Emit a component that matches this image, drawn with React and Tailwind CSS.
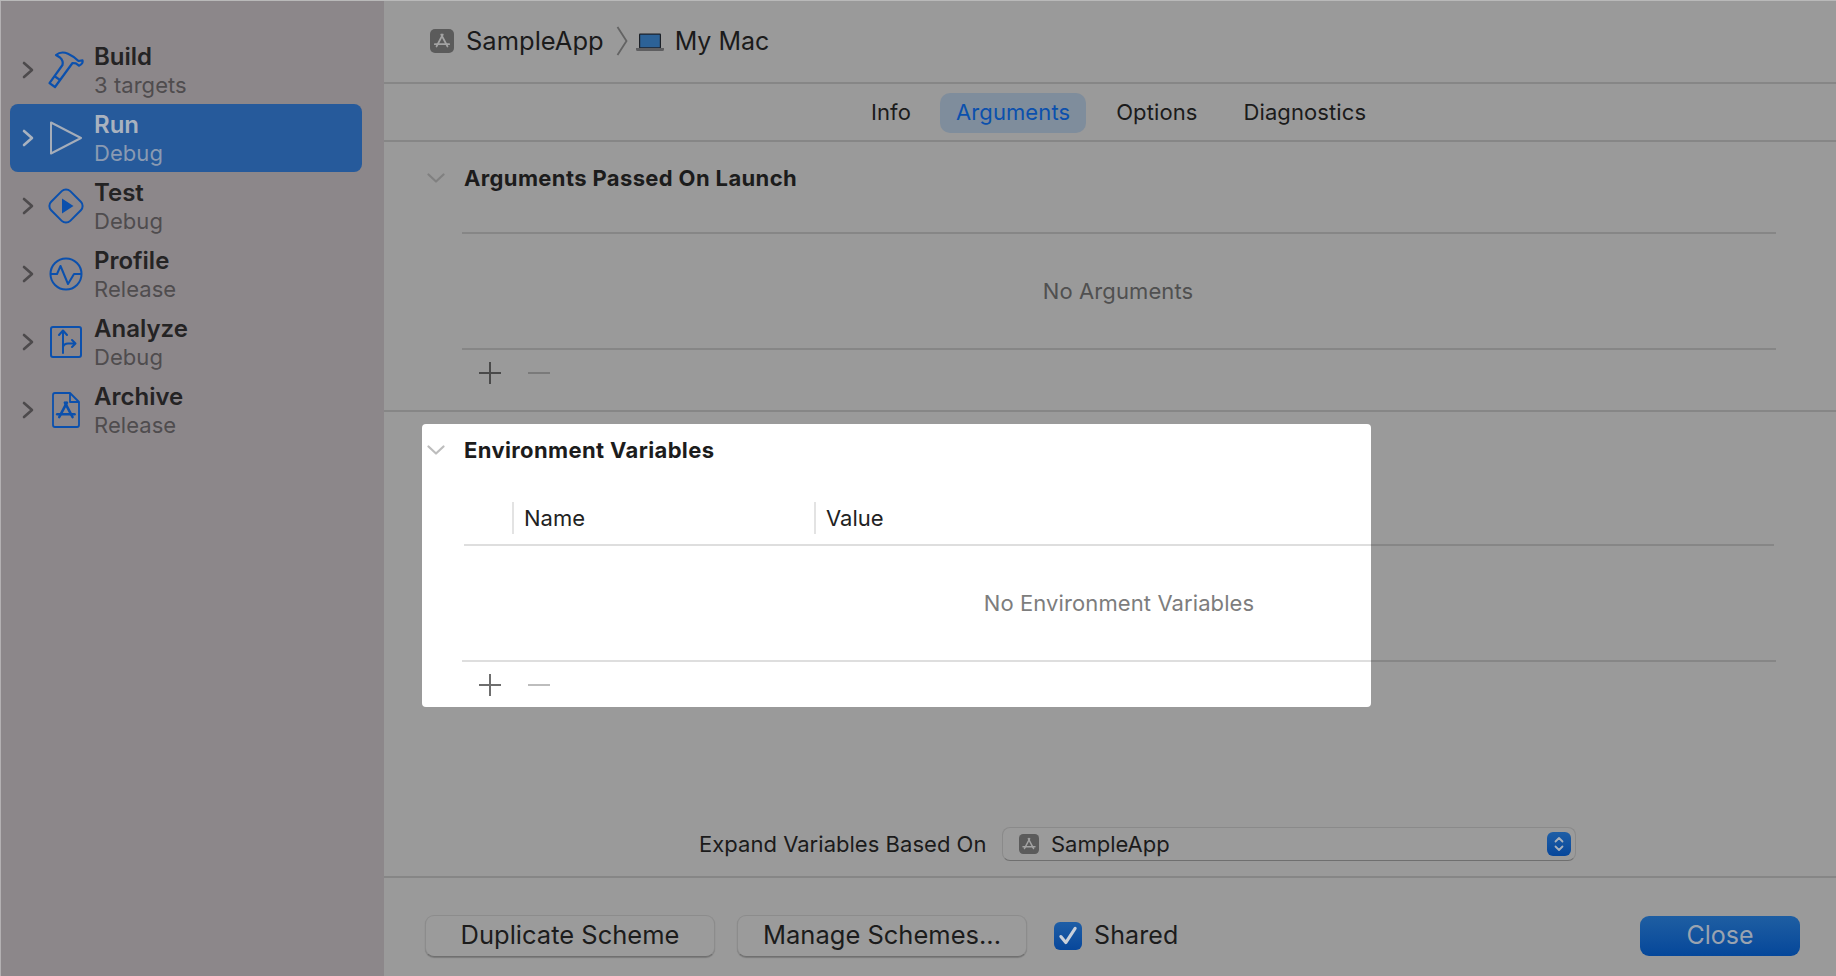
import React from 'react';

const BLUE = '#0b50ad';

// little three-stroke "A" used by the app icon and the archive icon
const AppGlyph = ({ color, width = 2 }) => (
  <g fill="none" stroke={color} strokeWidth={width} strokeLinecap="round">
    <path d="M12.8 5.5 6.5 17.5" />
    <path d="M11.2 5.5 17.5 17.5" />
    <path d="M4.8 15.2H19.2" />
  </g>
);

const AppIcon = ({ className }) => (
  <svg viewBox="0 0 24 24" className={className}>
    <rect width="24" height="24" rx="5" fill="#5b5b5b" />
    <AppGlyph color="#a3a3a3" width={1.7} />
  </svg>
);

const Chevron = ({ color }) => (
  <svg viewBox="0 0 12 18" className="w-3 h-[18px]">
    <path d="M2 2l8 7-8 7" fill="none" stroke={color} strokeWidth="2.6" strokeLinecap="round" strokeLinejoin="round" />
  </svg>
);

const DownChevron = ({ color }) => (
  <svg viewBox="0 0 18 10" className="w-[18px] h-[10px]">
    <path d="M1.5 1.5 9 8.5l7.5-7" fill="none" stroke={color} strokeWidth="2.2" strokeLinecap="round" strokeLinejoin="round" />
  </svg>
);

const Hammer = () => (
  <svg viewBox="46 46 40 44" className="w-10 h-11">
    <g fill="none" stroke={BLUE} strokeWidth="2.2" strokeLinejoin="round">
      <path d="M56 53c3-2.500 8-3 12-1.300 4 1.700 7 4 10.500 7.300l4-.6c.5 1.800-.6 4-3.600 5.300l-3-2.300-3.400-.4L55 85l-5.500-3.800L62.500 63c.7-3-.2-5.500-2.500-7.500z" />
      <path d="M55 74.500l5.200 3.700" />
    </g>
  </svg>
);

const RunIcon = () => (
  <svg viewBox="46 116 40 40" className="w-10 h-10">
    <path d="M51 120.500 81 136 51 151.500z" fill="none" stroke="#a5adb9" strokeWidth="2" strokeLinejoin="round" />
  </svg>
);

const TestIcon = () => (
  <svg viewBox="46 184 40 40" className="w-10 h-10">
    <rect x="52.500" y="190.500" width="27" height="27" rx="6" fill="none" stroke={BLUE} strokeWidth="2" transform="rotate(45 66 204)" />
    <path d="M62 196.500 73.500 204 62 211.500z" fill={BLUE} />
  </svg>
);

const ProfileIcon = () => (
  <svg viewBox="46 252 40 40" className="w-10 h-10">
    <circle cx="66" cy="272" r="15.500" fill="none" stroke={BLUE} strokeWidth="2" />
    <path d="M51 272h6l3.500-8 7.500 18 6-10h7.500" fill="none" stroke={BLUE} strokeWidth="2" strokeLinejoin="round" />
  </svg>
);

const AnalyzeIcon = () => (
  <svg viewBox="46 320 40 40" className="w-10 h-10">
    <rect x="51" y="325" width="30" height="30" rx="2" fill="none" stroke={BLUE} strokeWidth="2" />
    <g fill="none" stroke={BLUE} strokeWidth="2" strokeLinecap="round" strokeLinejoin="round">
      <path d="M63 351V329M59 333l4-4.500 4 4.500" />
      <path d="M63 345c1-3 3-3.500 5-3.500h7M72 338l3.500 3.500-3.500 3.500" />
    </g>
  </svg>
);

const ArchiveIcon = () => (
  <svg viewBox="46 388 40 40" className="w-10 h-10">
    <path d="M55 391h15l9 9v23a2 2 0 0 1-2 2H55a2 2 0 0 1-2-2v-30a2 2 0 0 1 2-2zM70 391v9h9" fill="none" stroke={BLUE} strokeWidth="1.800" strokeLinejoin="round" />
    <g transform="translate(51.500 394) scale(1.200)">
      <AppGlyph color={BLUE} width={2.200} />
    </g>
  </svg>
);

const Laptop = () => (
  <svg viewBox="0 0 28 18" className="w-7 h-[18px]">
    <rect x="3" y="0.500" width="22" height="15" rx="1" fill="#1a1f26" />
    <rect x="4.200" y="1.700" width="19.600" height="12.600" fill="#2c6297" />
    <path d="M0 15h28v1.500a1.500 1.500 0 0 1-1.500 1.500h-25A1.500 1.500 0 0 1 0 16.500z" fill="#5e5e60" />
  </svg>
);

const schemes = [
  { title: 'Build', sub: '3 targets', Icon: Hammer },
  { title: 'Run', sub: 'Debug', Icon: RunIcon, selected: true },
  { title: 'Test', sub: 'Debug', Icon: TestIcon },
  { title: 'Profile', sub: 'Release', Icon: ProfileIcon },
  { title: 'Analyze', sub: 'Debug', Icon: AnalyzeIcon },
  { title: 'Archive', sub: 'Release', Icon: ArchiveIcon },
];

const Sidebar = () => (
  <aside className="w-[384px] shrink-0 bg-[#8c878a] border-l border-[#b3b0b2] pt-[35px] pl-[9px] pr-[22px]">
    {schemes.map(({ title, sub, Icon, selected }) => (
      <div
        key={title}
        className={`h-[68px] flex items-center rounded-lg pl-[12px] ${selected ? 'bg-[#265a9b]' : ''}`}
      >
        <Chevron color={selected ? '#a9b2bf' : '#4d4a4c'} />
        <div className="ml-3 w-10 flex justify-center">
          <Icon />
        </div>
        <div className="ml-2 pt-[2px] flex flex-col">
          <span className={`text-[24px] leading-[28px] font-semibold ${selected ? 'text-[#a9b2bf]' : 'text-[#242324]'}`}>
            {title}
          </span>
          <span className={`text-[22px] leading-[28px] tracking-[0.05px] ${selected ? 'text-[#8a9ab2]' : 'text-[#4f4c4e]'}`}>{sub}</span>
        </div>
      </div>
    ))}
  </aside>
);

const tabs = ['Info', 'Arguments', 'Options', 'Diagnostics'];

const Tabs = () => (
  <div className="h-[58px] shrink-0 border-b-2 border-[#868686] flex items-center gap-4 pl-[472px] pt-px">
    {tabs.map((t) => (
      <div
        key={t}
        className={`h-10 flex items-center rounded-[10px] text-[22px] tracking-[0.1px] ${
          t === 'Arguments' ? 'px-4 -ml-[2px] -mr-px bg-[#7f8d9c] text-[#0b50ad]' : 'px-[15px] text-[#1b1b1b]'
        }`}
      >
        {t}
      </div>
    ))}
  </div>
);

const PlusMinus = ({ plus, minus }) => (
  <div className="h-12 flex items-center pl-[17px] gap-[27px]">
    <svg viewBox="0 0 22 22" className="w-[22px] h-[22px]">
      <path d="M11 0v22M0 11h22" stroke={plus} strokeWidth="2" />
    </svg>
    <div className={`w-[22px] h-[2px] ${minus}`} />
  </div>
);

const Heading = ({ chevron, children, className }) => (
  <div className={`flex items-center ${className}`}>
    <div className="w-[80px] flex justify-end pr-[19px] pl-[43px]">
      <DownChevron color={chevron} />
    </div>
    <h2 className="text-[22px] font-bold tracking-[0.37px] text-[#1c1c1c]">{children}</h2>
  </div>
);

const ArgumentsSection = () => (
  <section className="h-[270px] shrink-0 border-b-2 border-[#868686]">
    <Heading chevron="#808080" className="h-[72px]">Arguments Passed On Launch</Heading>
    <div className="ml-[78px] mr-[60px] mt-[18px]">
      <div className="h-[118px] border-y-2 border-[#868686] flex items-center justify-center pt-px pr-[2px] text-[22px] tracking-[0.1px] text-[#505050]">
        No Arguments
      </div>
      <div className="-mt-px">
        <PlusMinus plus="#4a4a4a" minus="bg-[#7a7a7a]" />
      </div>
    </div>
  </section>
);

const EnvironmentSection = () => (
  <section className="relative h-[298px] shrink-0">
    {/* highlighted cut-out, sits behind the section content */}
    <div className="absolute left-[38px] top-3 w-[949px] h-[283px] bg-white rounded" />
    <div className="relative">
      <Heading chevron="#bdbdbd" className="h-[76px]">Environment Variables</Heading>
      <div className="ml-[80px] mr-[62px] h-[58px] border-b-2 border-black/[0.13] flex items-start pt-[14px] text-[22px] text-[#222]">
        <div className="ml-[48px] w-[302px] h-8 border-l-2 border-[#e3e3e3] pl-[10px] flex items-center">Name</div>
        <div className="h-8 border-l-2 border-[#e3e3e3] pl-[10px] flex items-center">Value</div>
      </div>
      <div className="ml-[78px] mr-[60px]">
        <div className="h-[116px] border-b-2 border-black/[0.13] flex items-center justify-center text-[22px] tracking-[0.1px] text-[#7d7d7d]">
          No Environment Variables
        </div>
        <div className="-mt-px">
          <PlusMinus plus="#6e6e6e" minus="bg-[#bdbdbd]" />
        </div>
      </div>
    </div>
  </section>
);

const ExpandRow = () => (
  <div className="flex-1 flex items-end pb-[15px] pl-[315px]">
    <div className="h-[34px] flex items-center text-[22px] text-[#1b1b1b]">
      <span className="w-[303px] tracking-[0.03px]">Expand Variables Based On</span>
      <div className="w-[574px] h-[34px] rounded-lg bg-[#9b9b9b] border border-[#8a8a8a] border-b-[#6f6f6f] flex items-center pl-4 pr-[4px]">
        <AppIcon className="w-5 h-5" />
        <span className="ml-3">SampleApp</span>
        <div className="ml-auto w-6 h-6 rounded-md bg-gradient-to-b from-[#1e5ea6] to-[#07479b] flex items-center justify-center">
          <svg viewBox="0 0 12 18" className="w-3 h-[18px]">
            <path d="M2.500 6.500 6 3l3.500 3.500M2.500 11.500 6 15l3.500-3.500" fill="none" stroke="#a9b1bc" strokeWidth="1.800" strokeLinecap="round" strokeLinejoin="round" />
          </svg>
        </div>
      </div>
    </div>
  </div>
);

const GrayButton = ({ children }) => (
  <button className="w-[290px] h-[42px] pb-[2px] rounded-[9px] bg-[#9b9b9b] border border-[#8c8c8c] border-b-[#707070] shadow-[0_1px_1px_rgba(0,0,0,0.2)] text-[25.5px] text-[#1c1c1c] flex items-center justify-center">
    {children}
  </button>
);

const Footer = () => (
  <div className="h-[100px] shrink-0 border-t-2 border-[#868686] pt-[37px] pl-[41px] pr-9 flex items-start">
    <GrayButton>Duplicate Scheme</GrayButton>
    <div className="ml-[22px]">
      <GrayButton>Manage Schemes...</GrayButton>
    </div>
    <div className="ml-[27px] h-[42px] flex items-center">
      <div className="w-7 h-7 rounded-md bg-gradient-to-b from-[#1e5ea6] to-[#07479b] flex items-center justify-center">
        <svg viewBox="0 0 20 20" className="w-[22px] h-[22px]">
          <path d="M3.500 10.500 8 16 16.500 3" fill="none" stroke="#c9d0da" strokeWidth="2.800" strokeLinecap="round" strokeLinejoin="round" />
        </svg>
      </div>
      <span className="ml-3 text-[25px] tracking-[0.1px] text-[#1c1c1c]">Shared</span>
    </div>
    <button className="ml-auto mt-px w-40 h-10 rounded-[9px] bg-gradient-to-b from-[#1e5ea2] to-[#05479a] text-[25px] text-[#9aa3b0] flex items-center justify-center">
      Close
    </button>
  </div>
);

const App = () => (
  <div className="w-[1836px] h-[976px] overflow-hidden flex bg-[#9a9a9a] border-t border-[#b9b9b9] font-['Inter',sans-serif]">
    <Sidebar />
    <main className="flex-1 min-w-0 flex flex-col">
      <header className="h-[83px] shrink-0 border-b-2 border-[#868686] flex items-center pl-[46px] pb-[2px]">
        <AppIcon className="w-6 h-6" />
        <span className="ml-3 pt-[2px] text-[25.5px] text-[#1b1b1b]">SampleApp</span>
        <svg viewBox="0 0 12 30" className="ml-[12px] w-3 h-[30px]">
          <path d="M1.500 1 10.500 15 1.500 29" fill="none" stroke="#636363" strokeWidth="1.800" />
        </svg>
        <div className="ml-2 mt-[3px]">
          <Laptop />
        </div>
        <span className="ml-[11px] pt-[2px] text-[25px] text-[#1b1b1b]">My Mac</span>
      </header>
      <Tabs />
      <ArgumentsSection />
      <EnvironmentSection />
      <ExpandRow />
      <Footer />
    </main>
  </div>
);

export default App;
